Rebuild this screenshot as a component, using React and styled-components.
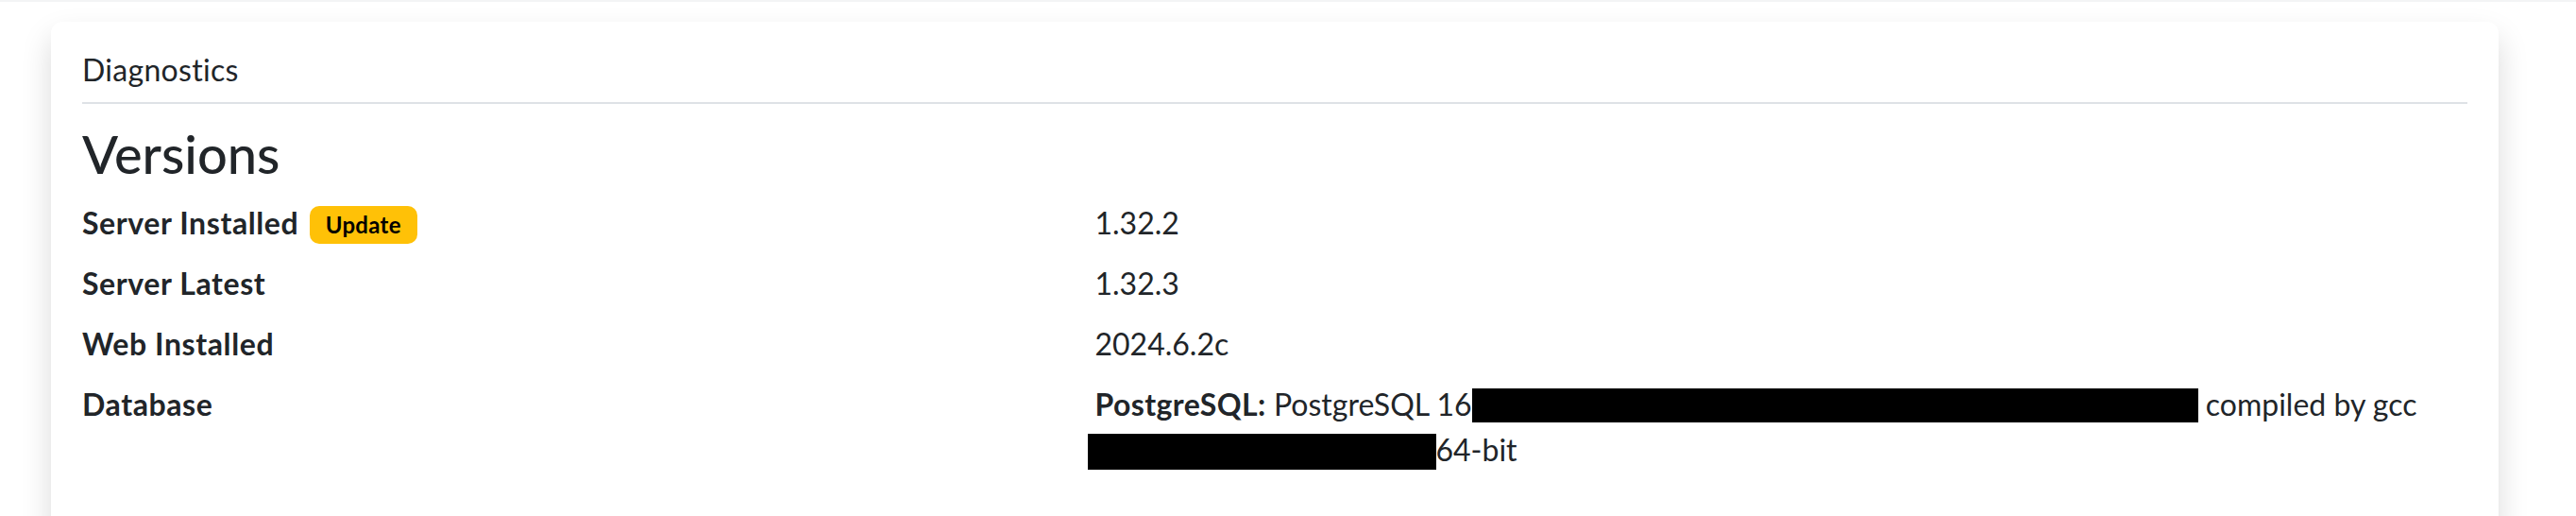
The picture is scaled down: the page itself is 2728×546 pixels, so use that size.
import React from 'react';
import styled, { createGlobalStyle } from 'styled-components';

const GlobalStyle = createGlobalStyle`
    body {
        margin: 0;
        background: #fff;
        color: #212529;
        font-family: "Lato", "Open Sans", "Liberation Sans", sans-serif;
        font-size: 32px;
        line-height: 48px;
    }
`
const TopEdge = styled.div`
    height: 2px;
    background: #f3f4f5;
`
const Page = styled.div`
    padding: 21px 82px 0 54px;
`
const Card = styled.section`
    background: #fff;
    border-radius: 12px;
    box-shadow: 0 16px 32px rgba(0, 0, 0, 0.15);
    padding: 27px 33px 64px;
`
const CardHeader = styled.div`
    font-size: 32px;
    line-height: 48px;
    letter-spacing: 0.3px;
    padding-bottom: 10px;
    border-bottom: 2px solid #dee2e6;
`
const SectionTitle = styled.h3`
    margin: 19px 0 16px;
    font-size: 56px;
    font-weight: 500;
    line-height: 1.2;
`
const InfoList = styled.dl`
    margin: 0;
    display: grid;
    grid-template-columns: calc((100% + 48px) * 5 / 12 - 48px) 1fr;
    column-gap: 48px;
    row-gap: 16px;
`
const Term = styled.dt`
    font-weight: 700;
    letter-spacing: 0.6px;
`
const Desc = styled.dd`
    margin: 0;
`
const Badge = styled.span`
    display: inline-block;
    margin-left: 3px;
    padding: 8px 17px;
    font-size: 24px;
    line-height: 24px;
    font-weight: 700;
    letter-spacing: 0.3px;
    color: #000;
    background: ${props => props.variant === 'warning' ? '#ffc107' : '#6c757d'};
    border-radius: 10px;
    vertical-align: 1px;
`
const Strong = styled.strong`
    font-weight: 700;
    letter-spacing: 0.4px;
`
const Redact = styled.span`
    display: inline-block;
    background: #000;
    height: ${props => props.tall ? '38px' : '36px'};
    vertical-align: ${props => props.tall ? '-9px' : '-7px'};
    margin-left: ${props => props.shift || 0}px;
`

const versions = [
    { label: 'Server Installed', value: '1.32.2', badge: 'Update' },
    { label: 'Server Latest', value: '1.32.3' },
    { label: 'Web Installed', value: '2024.6.2c' },
]

function App() {
    return (
        <>
            <GlobalStyle />
            <TopEdge />
            <Page>
                <Card>
                    <CardHeader>Diagnostics</CardHeader>
                    <SectionTitle>Versions</SectionTitle>
                    <InfoList>
                        {versions.map(v => (
                            <React.Fragment key={v.label}>
                                <Term>
                                    {v.label}
                                    {v.badge && <> <Badge variant="warning">{v.badge}</Badge></>}
                                </Term>
                                <Desc>{v.value}</Desc>
                            </React.Fragment>
                        ))}
                        <Term>Database</Term>
                        <Desc>
                            <Strong>PostgreSQL:</Strong> PostgreSQL 16<Redact style={{ width: 769 }} /> compiled by gcc <Redact tall shift={-8} style={{ width: 369 }} />64-bit
                        </Desc>
                    </InfoList>
                </Card>
            </Page>
        </>
    );
}

export default App;
